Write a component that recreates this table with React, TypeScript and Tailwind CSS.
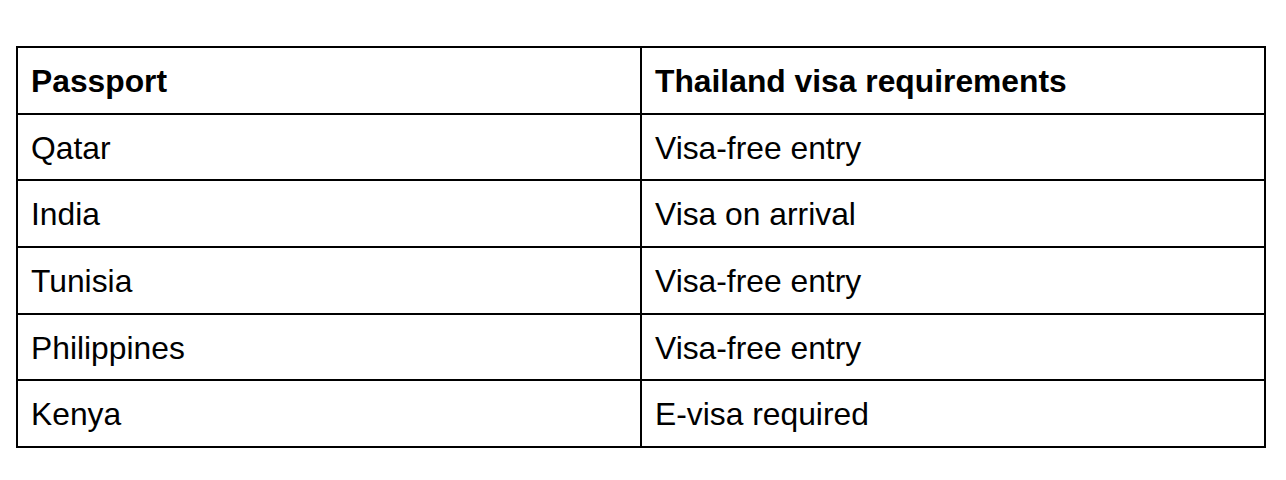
const rows = [
  ["Qatar", "Visa-free entry"],
  ["India", "Visa on arrival"],
  ["Tunisia", "Visa-free entry"],
  ["Philippines", "Visa-free entry"],
  ["Kenya", "E-visa required"],
];

export default function App() {
  return (
    <div className="w-[1286px] h-[480px] bg-white pt-[46px] pl-[16px] font-['Liberation_Sans',Arial,sans-serif] text-black text-[31.8px]">
      <div className="w-[1250px] h-[402px] border-2 border-black flex flex-col">
        <div className="flex-1 flex font-bold">
          <div className="w-[624px] border-r-2 border-black flex items-center pl-[13px] pt-[3px]">Passport</div>
          <div className="flex-1 flex items-center pl-[13px] pt-[3px]">Thailand visa requirements</div>
        </div>
        {rows.map(([country, req]) => (
          <div key={country} className="flex-1 flex border-t-2 border-black">
            <div className="w-[624px] border-r-2 border-black flex items-center pl-[13px] pt-[3px]">{country}</div>
            <div className="flex-1 flex items-center pl-[13px] pt-[3px]">{req}</div>
          </div>
        ))}
      </div>
    </div>
  );
}
